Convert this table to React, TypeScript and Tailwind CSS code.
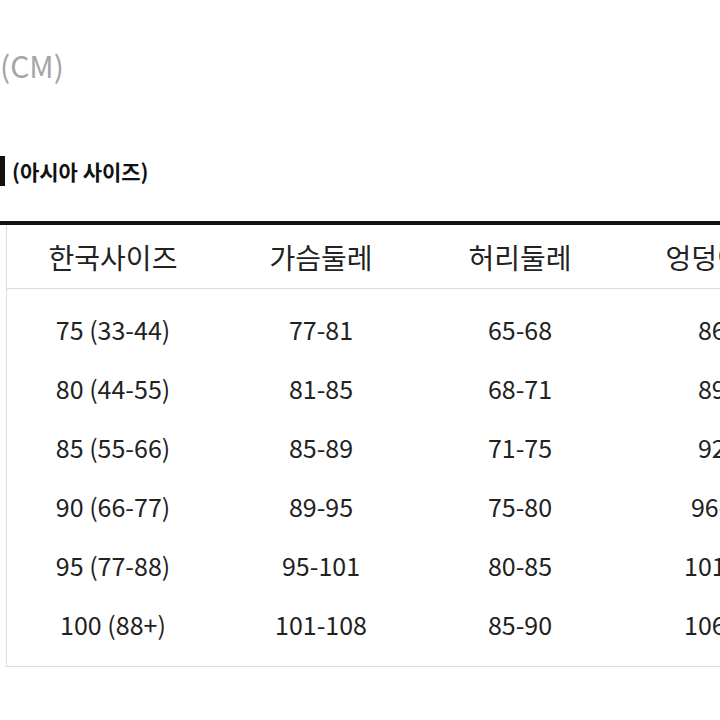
const rows = [
  ["75 (33-44)", "77-81", "65-68", "86-90"],
  ["80 (44-55)", "81-85", "68-71", "89-93"],
  ["85 (55-66)", "85-89", "71-75", "92-96"],
  ["90 (66-77)", "89-95", "75-80", "96-101"],
  ["95 (77-88)", "95-101", "80-85", "101-106"],
  ["100 (88+)", "101-108", "85-90", "106-112"],
];

const widths = ["w-[212px]", "w-[204px]", "w-[194px]", "w-[226px]"];

export default function App() {
  return (
    <div
      className="h-[720px] w-[720px] overflow-hidden bg-white text-[#222]"
      style={{ fontFamily: '"Noto Sans CJK KR", "Noto Sans", sans-serif' }}
    >
      <div className="pt-[44px] pl-0 text-[30px] leading-[42px] text-[#a5a5a5]">(CM)</div>

      <div className="mt-[70px] flex items-center gap-[7px]">
        <div className="h-[30px] w-[5px] bg-[#111]" />
        <span className="text-[21px] font-semibold leading-[30px] text-[#111]">(아시아 사이즈)</span>
      </div>

      <div className="mt-[35px] w-[842px] border-t-4 border-[#111]">
        <div className="ml-[6px] border-b border-l border-[#dcdcdc]">
          <div className="flex h-[64px] items-center border-b border-[#dcdcdc] text-[28px]">
            {["한국사이즈", "가슴둘레", "허리둘레", "엉덩이둘레"].map((h, i) => (
              <div key={h} className={`${widths[i]} shrink-0 text-center`}>
                {h}
              </div>
            ))}
          </div>
          <div className="pt-[11px] pb-[12px]">
            {rows.map((r) => (
              <div key={r[0]} className="flex h-[59px] items-center text-[25px]">
                {r.map((c, i) => (
                  <div key={i} className={`${widths[i]} shrink-0 text-center`}>
                    {c}
                  </div>
                ))}
              </div>
            ))}
          </div>
        </div>
      </div>
    </div>
  );
}
